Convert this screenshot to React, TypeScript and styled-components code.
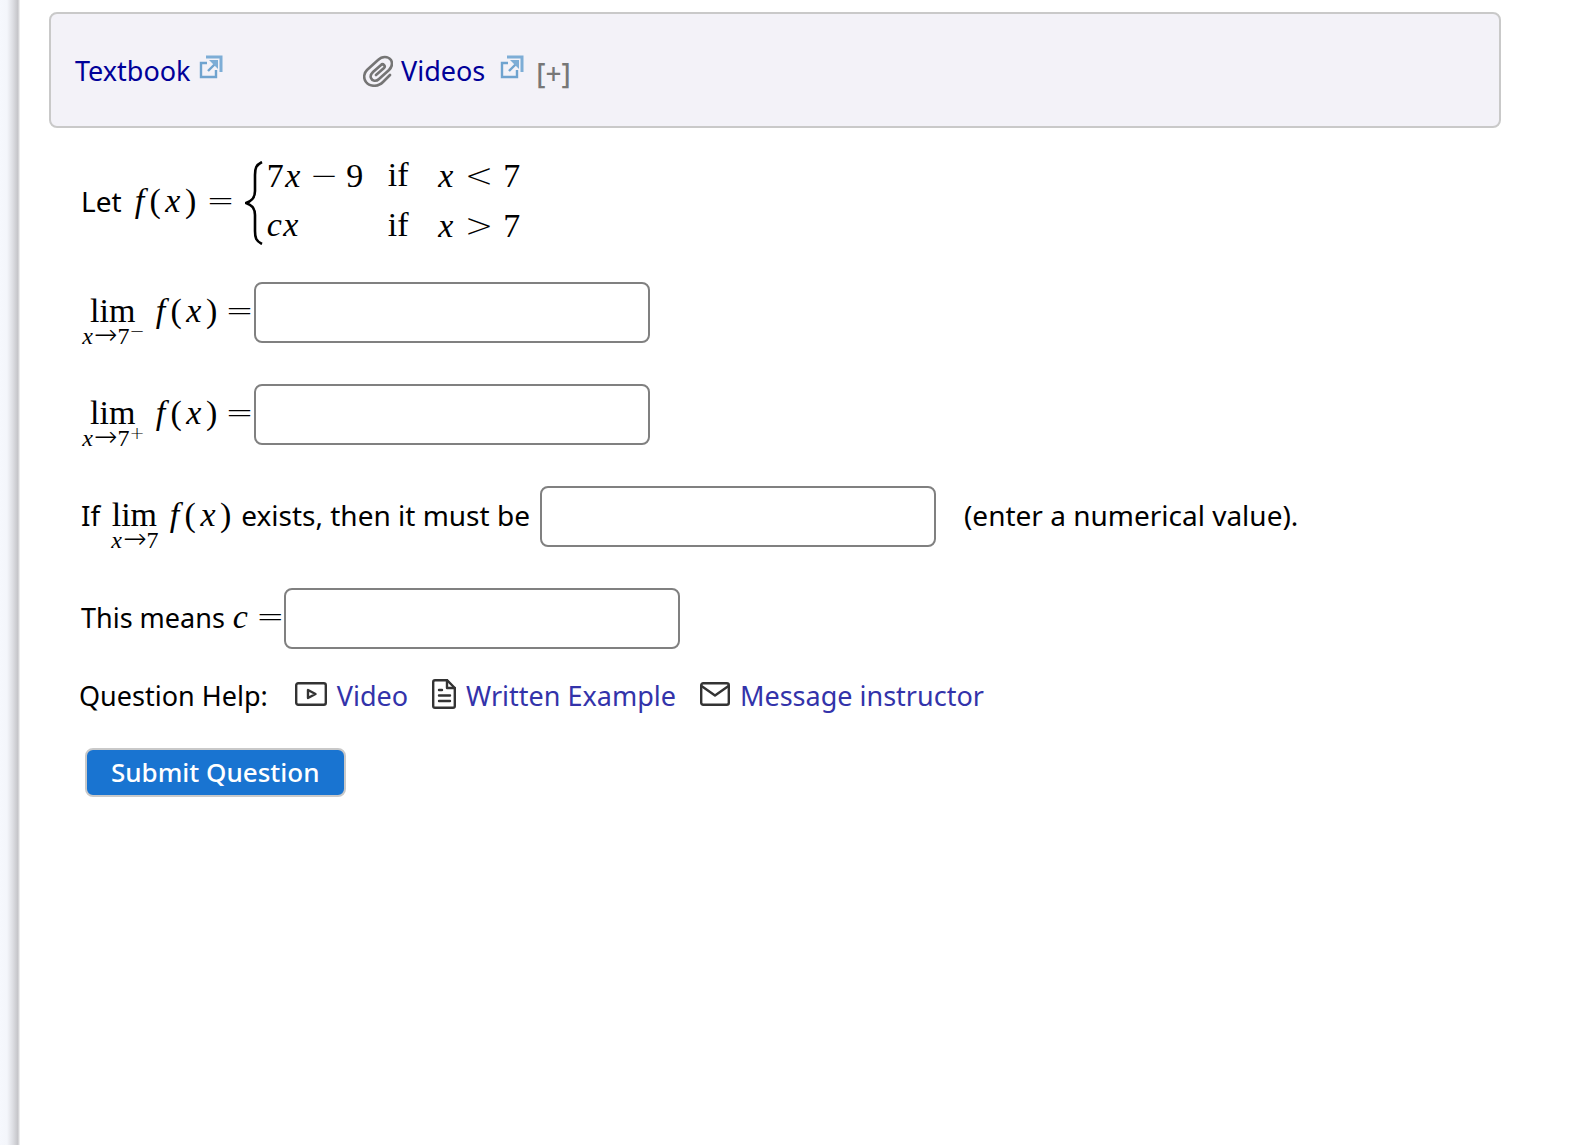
import React from "react";
import styled, { createGlobalStyle } from "styled-components";

const sans = `"Noto Sans", "Open Sans", sans-serif`;
const serif = `"Liberation Serif", "Times New Roman", serif`;

const GlobalStyle = createGlobalStyle`
  *, *::before, *::after { box-sizing: border-box; }
  body { margin: 0; background: #fff; }
`;

const Page = styled.div`
  display: flex;
  min-height: 100vh;
  font: 27px/36px ${sans};
  color: #000;
`;

const Gutter = styled.div`
  flex: 0 0 20px;
  background: linear-gradient(to right, #f6f8fd 0, #f4f6fb 7px, #dcdde2 13px, #c4c4c8 18px, #e4e4e6 19px, #f4f4f4 20px);
`;

const Content = styled.main`
  flex: 1;
  min-width: 0;
  padding: 12px 95px 40px 29px;
`;

const ResourceBar = styled.nav`
  display: flex;
  align-items: center;
  height: 116px;
  padding: 2px 24px 0;
  background: #f3f2f8;
  border: 2px solid #c9c9c9;
  border-radius: 8px;
`;

const Resource = styled.div<{ $width?: number }>`
  display: flex;
  align-items: center;
  gap: 8px;
  min-width: ${(p) => (p.$width ? `${p.$width}px` : "auto")};
`;

const ResourceLink = styled.a`
  display: flex;
  align-items: center;
  gap: 8px;
  color: #000099;
  text-decoration: none;
  svg { margin-bottom: 8px; }
`;

const Expand = styled.button`
  padding: 4px 4px 0;
  border: 0;
  background: none;
  color: #777;
  font: 500 28px/36px ${sans};
`;

const Question = styled.form`
  display: flex;
  flex-direction: column;
  align-items: flex-start;
  gap: 41px;
  padding: 32px 0 0 32px;
`;

const Definition = styled.div`
  display: flex;
  align-items: center;
  height: 81px;
  font-size: 28px;
`;

const Row = styled.div<{ $size?: number }>`
  display: flex;
  align-items: baseline;
  height: 61px;
  font-size: ${(p) => p.$size ?? 28}px;
  white-space: nowrap;
`;

const Label = styled.label<{ $gap?: number }>`
  display: flex;
  align-items: baseline;
  gap: ${(p) => p.$gap ?? 8}px;
`;

const Unit = styled.span`
  margin-left: 28px;
`;

const Answer = styled.input<{ $gap?: number }>`
  width: 396px;
  height: 61px;
  margin: 0 0 0 ${(p) => p.$gap ?? 0}px;
  padding: 0 12px 4px;
  border: 2px solid #808080;
  border-radius: 8px;
  background: #fff;
  font: 28px/36px ${sans};
`;

const MathLine = styled.span`
  display: inline-flex;
  align-items: baseline;
  font: 34px/36px ${serif};
`;

const Var = styled.i<{ $w?: number }>`
  display: inline-block;
  min-width: ${(p) => p.$w ?? 18}px;
  text-align: center;
`;

const Op = styled.span<{ $left?: number; $right?: number }>`
  margin: 0 ${(p) => p.$right ?? 0}px 0 ${(p) => p.$left ?? 8}px;
  font: 200 34px/36px "DejaVu Sans", sans-serif;
`;

const Limit = styled.span`
  display: inline-flex;
  flex-direction: column;
  align-items: center;
  margin-right: 6px;
  line-height: 26px;
`;

const Under = styled.span`
  display: flex;
  align-items: baseline;
  height: 22px;
  font: 24px/22px ${serif};
`;

const SmallOp = styled.span`
  font: 200 28px/22px "DejaVu Sans", sans-serif;
`;

const Sup = styled.span`
  align-self: flex-start;
  font: 200 18px/14px "DejaVu Sans", sans-serif;
`;

const Cases = styled.div`
  display: grid;
  grid-template-columns: 121px 49px auto;
  row-gap: 13px;
  padding-left: 4px;
`;

const Help = styled.div`
  display: flex;
  align-items: center;
  gap: 24px;
  margin-top: 29px;
  padding-left: 30px;
`;

const HelpTitle = styled.span`
  margin-right: 3px;
`;

const HelpLink = styled.a`
  display: flex;
  align-items: center;
  gap: 10px;
  color: #3333aa;
  text-decoration: none;
  svg { margin-bottom: 4px; }
`;

const Submit = styled.button`
  display: block;
  height: 49px;
  margin: 34px 0 0 36px;
  padding: 0 24px 2px;
  border: 2px solid #c9c9c9;
  border-radius: 8px;
  background: #1974d1;
  color: #fff;
  font: 500 26px/36px ${sans};
`;

const ExternalIcon = () => (
  <svg width="24" height="24" viewBox="0 0 24 24" fill="none" stroke="#6fa3cf" strokeWidth="2.400" aria-hidden="true">
    <path d="M7 2H22V17" strokeWidth="3" stroke="#7dadd6" />
    <path d="M8 8H2V22H17V15" />
    <path d="M9 16L16 9" />
    <path d="M10 5H19V14L16.500 11.500L13 8Z" fill="#7dadd6" stroke="none" />
  </svg>
);

const ClipIcon = () => (
  <svg width="30" height="32" viewBox="0 0 30 32" fill="none" stroke="#757575" strokeWidth="2.600" strokeLinecap="round" aria-hidden="true">
    <path d="M27 20L20 27C15 32 7 32 3 27C0 23 1 18 4 15L15 5C19 1 25 1 28 5C30 9 29 12 26 15L16 24C13 27 9 26 8 23C7 21 8 19 10 17L18 10C20 8 23 11 21 13L13 20" />
  </svg>
);

const VideoIcon = () => (
  <svg width="32" height="24" viewBox="0 0 32 24" fill="none" stroke="#333" strokeWidth="2.400" strokeLinejoin="round" aria-hidden="true">
    <rect x="1.200" y="1.200" width="29.600" height="21.600" rx="2" />
    <path d="M13 8V16L20.500 12Z" />
  </svg>
);

const DocIcon = () => (
  <svg width="24" height="30" viewBox="0 0 24 30" fill="none" stroke="#333" strokeWidth="2.400" strokeLinejoin="round" strokeLinecap="round" aria-hidden="true">
    <path d="M15 1.200H3Q1.200 1.200 1.200 3V27Q1.200 28.800 3 28.800H21Q22.800 28.800 22.800 27V9Z" />
    <path d="M15 1.200V9H22.800M7 11H10M7 16.500H18M7 22H18" />
  </svg>
);

const MailIcon = () => (
  <svg width="30" height="24" viewBox="0 0 30 24" fill="none" stroke="#333" strokeWidth="2.400" strokeLinejoin="round" aria-hidden="true">
    <rect x="1.200" y="1.200" width="27.600" height="21.600" rx="2" />
    <path d="M1.500 4L15 13.500L28.500 4" />
  </svg>
);

const BraceMark = styled.svg`
  margin-top: 4px;
`;

const Brace = () => (
  <BraceMark width="18" height="84" viewBox="0 0 18 84" aria-hidden="true">
    <path d="M17 1C11 4 10 7 10 14V30C10 37 7 40 1 42C7 44 10 47 10 54V70C10 77 11 80 17 83" fill="none" stroke="#000" strokeWidth="2.600" />
  </BraceMark>
);

const FofX = () => (
  <>
    <Var $w={20}>f</Var>
    <span>(</span>
    <Var $w={24}>x</Var>
    <span>)</span>
  </>
);

const Lim = ({ side }: { side?: string }) => (
  <Limit>
    <span>lim</span>
    <Under>
      <Var $w={13}>x</Var>
      <SmallOp>→</SmallOp>
      <span>7</span>
      {side && <Sup>{side}</Sup>}
    </Under>
  </Limit>
);

const Condition = ({ sign }: { sign: string }) => (
  <MathLine>
    <Var>x</Var>
    <Op $left={10} $right={10}>{sign}</Op>
    <span>7</span>
  </MathLine>
);

const OneSided = ({ id, side }: { id: string; side: string }) => (
  <Row>
    <Label htmlFor={id}>
      <MathLine>
        <Lim side={side} />
        <FofX />
        <Op>=</Op>
      </MathLine>
    </Label>
    <Answer id={id} type="text" />
  </Row>
);

export default function App() {
  return (
    <Page>
      <GlobalStyle />
      <Gutter />
      <Content>
        <ResourceBar>
          <Resource $width={288}>
            <ResourceLink href="#textbook">
              Textbook
              <ExternalIcon />
            </ResourceLink>
          </Resource>
          <Resource>
            <ClipIcon />
            <ResourceLink href="#videos">
              <span>Videos&nbsp;</span>
              <ExternalIcon />
            </ResourceLink>
            <Expand type="button">[+]</Expand>
          </Resource>
        </ResourceBar>
        <Question id="question" onSubmit={(e) => e.preventDefault()}>
          <Definition>
            <Label as="span">
              <span>Let</span>
              <MathLine>
                <FofX />
                <Op $left={10} $right={10}>=</Op>
              </MathLine>
            </Label>
            <Brace />
            <Cases>
              <MathLine>
                <span>7</span>
                <Var>x</Var>
                <Op $right={8}>−</Op>
                <span>9</span>
              </MathLine>
              <MathLine>if</MathLine>
              <Condition sign="<" />
              <MathLine>
                <Var $w={14}>c</Var>
                <Var>x</Var>
              </MathLine>
              <MathLine>if</MathLine>
              <Condition sign=">" />
            </Cases>
          </Definition>
          <OneSided id="left" side="−" />
          <OneSided id="right" side="+" />
          <Row>
            <Label htmlFor="both" $gap={10}>
              <span>If</span>
              <MathLine>
                <Lim />
                <FofX />
              </MathLine>
              <span>exists, then it must be</span>
            </Label>
            <Answer id="both" type="text" $gap={10} />
            <Unit>(enter a numerical value).</Unit>
          </Row>
          <Row $size={27}>
            <Label htmlFor="constant">
              <span>This means</span>
              <MathLine>
                <Var $w={14}>c</Var>
                <Op>=</Op>
              </MathLine>
            </Label>
            <Answer id="constant" type="text" />
          </Row>
        </Question>
        <Help>
          <HelpTitle>Question Help:</HelpTitle>
          <HelpLink href="#video">
            <VideoIcon />
            Video
          </HelpLink>
          <HelpLink href="#example">
            <DocIcon />
            Written Example
          </HelpLink>
          <HelpLink href="#message">
            <MailIcon />
            Message instructor
          </HelpLink>
        </Help>
        <Submit type="submit" form="question">Submit Question</Submit>
      </Content>
    </Page>
  );
}
